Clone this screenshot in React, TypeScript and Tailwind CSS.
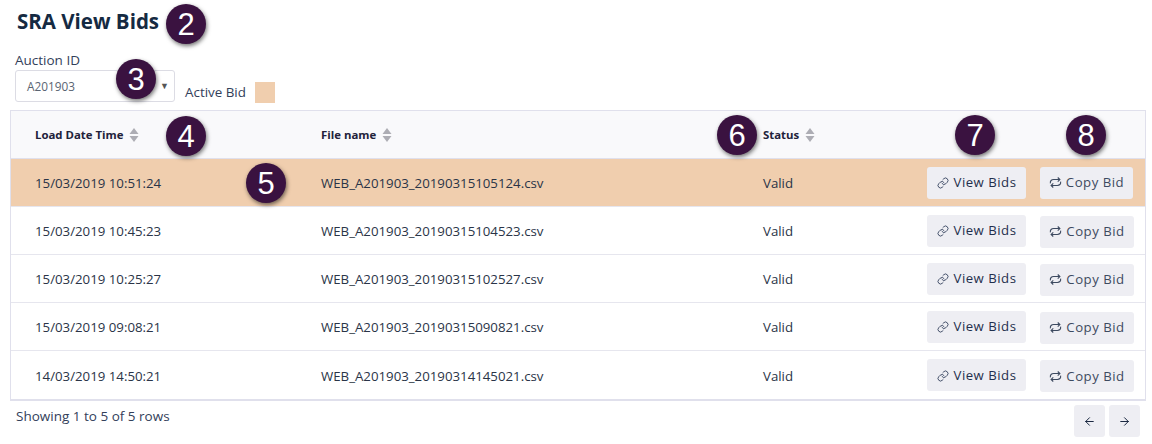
import { ArrowLeft, ArrowRight, Link } from 'lucide-react';

const rows = [
  { date: '15/03/2019 10:51:24', file: 'WEB_A201903_20190315105124.csv', active: true },
  { date: '15/03/2019 10:45:23', file: 'WEB_A201903_20190315104523.csv' },
  { date: '15/03/2019 10:25:27', file: 'WEB_A201903_20190315102527.csv' },
  { date: '15/03/2019 09:08:21', file: 'WEB_A201903_20190315090821.csv' },
  { date: '14/03/2019 14:50:21', file: 'WEB_A201903_20190314145021.csv' },
];

function Badge({ n, className }: { n: number; className: string }) {
  return (
    <div
      className={`absolute flex h-10 w-10 items-center justify-center rounded-full bg-[#3a1240] text-[31px] leading-none text-white shadow-[1px_2px_4px_rgba(0,0,0,0.55)] font-['Liberation_Sans',sans-serif] ${className}`}
    >
      {n}
    </div>
  );
}

function SortArrows() {
  return (
    <svg width="10" height="16" viewBox="0 0 10 16" className="ml-[6px] fill-[#adadb4]">
      <path d="M5 1 L9.5 7 H0.5 Z" />
      <path d="M5 15 L9.5 9 H0.5 Z" />
    </svg>
  );
}

function CycleIcon() {
  return (
    <svg width="13" height="13" viewBox="0 0 14 14" fill="none" stroke="currentColor" strokeWidth="1.2" className="mr-[4px]">
      <path d="M1.5 8 C1 5.2 2.8 3.8 5 3.8 H11.5" />
      <path d="M9.4 1.6 L11.7 3.8 L9.4 6" />
      <path d="M12.5 6 C13 8.8 11.2 10.2 9 10.2 H2.5" />
      <path d="M4.6 8 L2.3 10.2 L4.6 12.4" />
    </svg>
  );
}

function HeaderCell({ label, className }: { label: string; className: string }) {
  return (
    <div className={`flex items-center pt-[1px] text-[11.4px] font-bold text-[#22223a] ${className}`}>
      {label}
      <SortArrows />
    </div>
  );
}

export default function App() {
  return (
    <div className="relative h-[444px] w-[1152px] overflow-hidden bg-white font-['Open_Sans',sans-serif] text-[#2a3447]">
      <h1 className="pl-[17px] pt-[7px] text-[20.5px] font-bold leading-[28px] text-[#152a42]">SRA View Bids</h1>

      <div className="ml-[15px] mt-[17px] flex items-end">
        <div>
          <div className="pb-[1px] text-[13.5px] leading-[17px] text-[#33405a]">Auction ID</div>
          <div className="flex h-[32px] w-[160px] items-center justify-between rounded-[3px] border border-[#dcdce4] pl-[11px] pr-[5px] text-[11.8px] text-[#5a6472]">
            <span className="pt-[1px]">A201903</span>
            <span className="text-[9px] text-[#555]">▼</span>
          </div>
        </div>
        <div className="mb-[-1px] ml-[10px] flex items-center">
          <span className="text-[13.4px] text-[#33405a]">Active Bid</span>
          <div className="ml-[9px] h-[21px] w-[20px] bg-[#f0ceae]" />
        </div>
      </div>

      <div className="ml-[10px] mt-[8px] w-[1136px] border border-b-2 border-[#e0e0ec]">
        <div className="flex h-[48px] items-center border-b border-[#e0e0ec] bg-[#f9f9fb]">
          <HeaderCell label="Load Date Time" className="w-[286px] pl-[24px]" />
          <HeaderCell label="File name" className="w-[442px] pl-[24px]" />
          <HeaderCell label="Status" className="pl-[24px]" />
        </div>
        {rows.map((r, i) => (
          <div
            key={r.file}
            className={`flex h-[48px] items-center text-[13.25px] ${r.active ? 'bg-[#f0ceae]' : 'bg-white'} ${i < rows.length - 1 ? 'border-b border-[#e6e6ee]' : ''}`}
          >
            <div className="w-[286px] pl-[24px] pt-[3px]">{r.date}</div>
            <div className="w-[442px] pl-[24px] pt-[3px]">{r.file}</div>
            <div className="w-[188px] pl-[24px] pt-[3px]">Valid</div>
            <button className="flex h-[32px] w-[99px] items-center justify-center rounded-[3px] bg-[#eeeef3] text-[13.2px] tracking-[0.5px] text-[#1f2f4d]">
              <Link size={12} strokeWidth={1.6} className="mr-[5px] mt-[1px]" />
              <span className="pt-[1px]">View Bids</span>
            </button>
            <button className={`ml-[14px] flex h-[32px] items-center justify-center rounded-[3px] bg-[#eeeef3] text-[13.2px] tracking-[0.5px] text-[#3d4a60] ${r.active ? 'w-[93px]' : 'mt-[2px] w-[94px]'}`}>
              <CycleIcon />
              <span className="pt-[1px]">Copy Bid</span>
            </button>
          </div>
        ))}
      </div>

      <div className="mt-[4px] flex items-start justify-between pl-[16px] pr-[12px]">
        <span className="text-[13.5px] leading-[22px] text-[#33405a]">Showing 1 to 5 of 5 rows</span>
        <div className="flex gap-[4px]">
          <button className="flex h-[32px] w-[31px] items-center justify-center rounded-[3px] bg-[#eeeef3] text-[#15233d]">
            <ArrowLeft size={13} strokeWidth={1.8} />
          </button>
          <button className="flex h-[32px] w-[31px] items-center justify-center rounded-[3px] bg-[#eeeef3] text-[#15233d]">
            <ArrowRight size={13} strokeWidth={1.8} />
          </button>
        </div>
      </div>

      <Badge n={2} className="left-[166px] top-[4px]" />
      <Badge n={3} className="left-[116px] top-[59px]" />
      <Badge n={4} className="left-[166px] top-[116px]" />
      <Badge n={5} className="left-[246px] top-[163px]" />
      <Badge n={6} className="left-[717px] top-[115px]" />
      <Badge n={7} className="left-[955px] top-[115px]" />
      <Badge n={8} className="left-[1066px] top-[115px]" />
    </div>
  );
}
